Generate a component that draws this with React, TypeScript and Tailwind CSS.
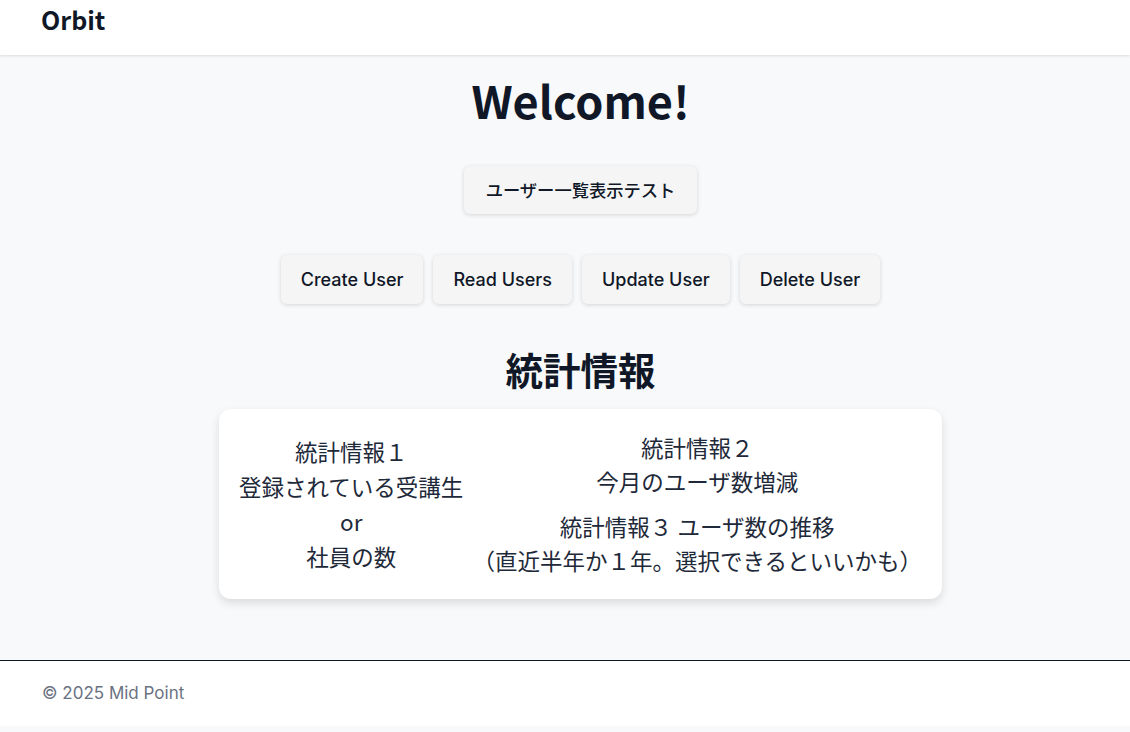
const jp = "font-['Noto_Sans_CJK_JP',sans-serif]";
const inter = "font-['Inter','Noto_Sans_CJK_JP',sans-serif]";

const crudButtons = ["Create User", "Read Users", "Update User", "Delete User"];

function Header() {
  return (
    <header className="h-[55px] bg-white shadow-[0_1px_3px_rgba(0,0,0,0.12)] px-[41px] relative z-10">
      <div className={`${jp} text-[25px] leading-[39px] font-bold text-gray-900`}>Orbit</div>
    </header>
  );
}

function StatsCard() {
  return (
    <div className={`${jp} mt-[20px] w-[723px] h-[190px] bg-white rounded-xl shadow-[0_4px_10px_rgba(0,0,0,0.12)] flex items-center justify-center gap-[9px] text-[22.5px] text-gray-800 text-center`}>
      {/* left column */}
      <div className="leading-[35px]">
        <p>統計情報１</p>
        <p>登録されている受講生</p>
        <p>or</p>
        <p>社員の数</p>
      </div>
      {/* right column */}
      <div className="leading-[34px] -mt-[2px]">
        <div>
          <p>統計情報２</p>
          <p>今月のユーザ数増減</p>
        </div>
        <div className="mt-[11px]">
          <p>統計情報３ ユーザ数の推移</p>
          <p>（直近半年か１年。選択できるといいかも）</p>
        </div>
      </div>
    </div>
  );
}

export default function App() {
  return (
    <div className="min-h-[732px] bg-[#f8f9fb] flex flex-col pb-[6px]">
      <Header />

      <main className="flex-1 flex flex-col items-center pl-[31px]">
        <h1 className={`${jp} mt-[22px] text-[45px] leading-none font-bold text-gray-900`}>Welcome!</h1>

        <button className={`${jp} mt-[44px] h-[48px] px-[22px] rounded-md bg-[#f5f5f5] shadow-[0_1px_4px_rgba(0,0,0,0.15)] text-[17.3px] font-medium text-gray-900`}>
          ユーザー一覧表示テスト
        </button>

        <div className="mt-[41px] flex gap-[10px]">
          {crudButtons.map((label) => (
            <button
              key={label}
              className={`${inter} h-[49px] px-5 rounded-md bg-[#f5f5f5] shadow-[0_1px_4px_rgba(0,0,0,0.15)] text-lg font-medium text-gray-900`}
            >
              {label}
            </button>
          ))}
        </div>

        <h2 className={`${jp} mt-[45px] text-[37.5px] leading-10 font-bold text-gray-900`}>統計情報</h2>

        <StatsCard />
      </main>

      <footer className="h-[66px] bg-white border-t border-gray-900 px-[42px] flex items-center">
        <p className={`${inter} text-[17px] text-gray-500`}>© 2025 Mid Point</p>
      </footer>
    </div>
  );
}
